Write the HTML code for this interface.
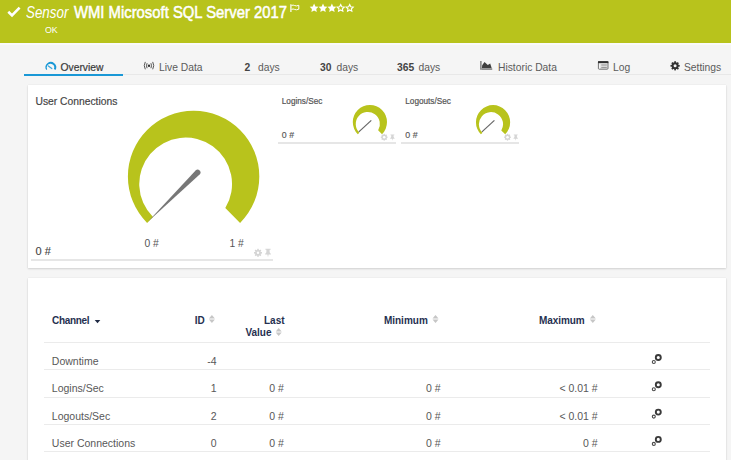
<!DOCTYPE html>
<html><head><meta charset="utf-8">
<style>
*{margin:0;padding:0;box-sizing:border-box}
html,body{width:731px;height:460px;overflow:hidden;background:#f5f5f5;font-family:"Liberation Sans",sans-serif;position:relative}
.a{position:absolute;white-space:nowrap}
#hdr{position:absolute;left:0;top:0;width:731px;height:43px;background:#b8c31c}
#hdr .t{color:#fff}
.tab{color:#5b5b5b;font-size:10.3px;line-height:12px}
.card{position:absolute;background:#fff;box-shadow:0 1px 2px rgba(0,0,0,.14),0 0 1px rgba(0,0,0,.1)}
.ttl{color:#444;-webkit-text-stroke:0.18px #444}
.th{color:#263050;font-size:10px;line-height:11.5px;font-weight:bold}
.td{color:#585858;font-size:10.5px;line-height:12px}
.r{width:100px;text-align:right}
.rl{position:absolute;left:44px;width:666px;height:1px;background:#ebebeb}
</style></head><body>
<div class="a" style="left:0;top:43px;width:731px;height:2px;background:#fafafa"></div>
<div id="hdr">
  <svg class="a" style="left:7px;top:6px" width="14" height="12" viewBox="0 0 14 12"><path d="M1.3 5.8 L5 9.4 L12.6 1.6" fill="none" stroke="#fff" stroke-width="2.6"/></svg>
  <div class="a t" style="left:26px;top:3px;font-size:15.5px;line-height:18px;font-style:italic;transform:scale(0.862,1.05);transform-origin:0 0">Sensor</div>
  <div class="a t" style="left:74px;top:3px;font-size:15.5px;line-height:18px;-webkit-text-stroke:0.5px #fff;transform:scale(0.957,1.05);transform-origin:0 0">WMI Microsoft SQL Server 2017</div>
  <svg class="a" style="left:0;top:0" width="731" height="43"><g fill="none" stroke="#fff" stroke-width="1.15"><path d="M290.9 4.2 V12" stroke-width="1.2"/><path d="M291.5 5.5 C293.8 4 295.3 7.2 298.8 5.3 V9.2 C295.3 11.1 293.8 7.9 291.5 9.4" stroke-width="1"/></g>
  <defs><path id="star" d="M0.00 -4.60 L1.32 -1.82 L4.37 -1.42 L2.14 0.70 L2.70 3.72 L0.00 2.25 L-2.70 3.72 L-2.14 0.70 L-4.37 -1.42 L-1.32 -1.82 Z"/></defs>
  <g fill="#fff"><use href="#star" x="314.1" y="8.2"/><use href="#star" x="323" y="8.2"/><use href="#star" x="331.9" y="8.2"/></g>
  <g fill="none" stroke="#fff" stroke-width="1.4" stroke-linejoin="miter"><use href="#star" x="340.7" y="8.2" transform="translate(340.7 8.2) scale(0.8) translate(-340.7 -8.2)"/><use href="#star" x="349.7" y="8.2" transform="translate(349.7 8.2) scale(0.8) translate(-349.7 -8.2)"/></g>
  </svg>
  <div class="a t" style="left:44.5px;top:24px;font-size:9.6px;line-height:11px;transform:scaleX(0.92);transform-origin:0 0">OK</div>
</div>

<!-- tabs -->
<div class="a" style="left:24px;top:74px;width:707px;height:1px;background:#e8e8e8"></div>
<div class="a" style="left:24px;top:73.5px;width:99px;height:2px;background:#1a98d6"></div>
<svg class="a" style="left:0;top:0" width="731" height="80">
  <path d="M46.22 69.92 A5.35 5.35 0 1 1 55.48 69.92 L53.97 69.05 A3.80 3.80 0 1 0 47.19 69.36 Z" fill="#1a98d6"/>
  <path d="M48.3 65.9 L51.8 68.6" stroke="#3aa7dc" stroke-width="1.2" stroke-linecap="round"/>
  <g fill="none" stroke="#555" stroke-width="1">
    <path d="M147.1 63.2 A5.5 5.5 0 0 0 147.1 68.2 M150.9 63.2 A5.5 5.5 0 0 1 150.9 68.2"/>
    <path d="M145.3 61.9 A7.5 7.5 0 0 0 145.3 69.3 M152.7 61.9 A7.5 7.5 0 0 1 152.7 69.3"/>
  </g>
  <circle cx="149" cy="65.7" r="1.2" fill="#333"/>
  <path d="M480.9 60.9 V69.7" stroke="#666" stroke-width="1.2"/>
  <path d="M481.7 69.8 L482.2 65.2 L484.5 62 L487.8 65.1 L490.2 63.6 L492.2 69.8 Z" fill="#3f3f3f"/>
  <rect x="481.6" y="68" width="10.6" height="1.8" fill="#999"/>
  <rect x="598.4" y="61.6" width="9.6" height="7.6" rx="0.8" fill="#e2e2e2" stroke="#666" stroke-width="0.9"/>
  <rect x="598" y="61.2" width="10.4" height="1.9" fill="#2f2f2f"/>
  <path d="M601.3 65 H606.8 M601.3 67.4 H606.8" stroke="#888" stroke-width="0.9"/>
  <path d="M599.6 64.2 V68.4" stroke="#f7f7f7" stroke-width="1"/>
  <g transform="translate(675.1 65.8)" fill="#333">
    <circle r="3.5"/>
    <rect x="-0.85" y="-4.6" width="1.7" height="9.2"/>
    <rect x="-0.85" y="-4.6" width="1.7" height="9.2" transform="rotate(45)"/>
    <rect x="-0.85" y="-4.6" width="1.7" height="9.2" transform="rotate(90)"/>
    <rect x="-0.85" y="-4.6" width="1.7" height="9.2" transform="rotate(135)"/>
    <circle r="1.5" fill="#f5f5f5"/>
  </g>
</svg>
<div class="a tab" style="left:60.5px;top:62px;color:#3a3a3a;font-size:10.3px;-webkit-text-stroke:0.2px #3a3a3a">Overview</div>
<div class="a tab" style="left:159px;top:62px">Live Data</div>
<div class="a tab" style="left:244.5px;top:62px"><b style="color:#444">2</b></div>
<div class="a tab" style="left:258px;top:62px">days</div>
<div class="a tab" style="left:320px;top:62px"><b style="color:#444">30</b></div>
<div class="a tab" style="left:336.5px;top:62px">days</div>
<div class="a tab" style="left:397px;top:62px"><b style="color:#444">365</b></div>
<div class="a tab" style="left:418.5px;top:62px">days</div>
<div class="a tab" style="left:498px;top:62px">Historic Data</div>
<div class="a tab" style="left:613px;top:62px">Log</div>
<div class="a tab" style="left:684px;top:62px">Settings</div>

<!-- card 1 -->
<div class="card" style="left:28px;top:85px;width:698px;height:183px"></div>
<div class="a ttl" style="left:35.5px;top:96px;font-size:10.3px;line-height:11px">User Connections</div>

<svg class="a" style="left:0;top:0" width="731" height="460">
  <path d="M147.1 222.9 A65.7 65.7 0 1 1 240.1 222.9 L225.3 208.1 A46.4 46.4 0 1 0 153.0 217.0 Z" fill="#b8c31c"/>
  <path d="M147.6 222 L195.6 170.4 A2.8 2.8 0 0 1 199.6 174.4 Z" fill="#777"/>
  <g transform="translate(369.9 122.1) scale(0.2603) translate(-193.6 -176.4)">
    <path d="M147.1 222.9 A65.7 65.7 0 1 1 240.1 222.9 L225.3 208.1 A46.4 46.4 0 1 0 153.0 217.0 Z" fill="#b8c31c"/>
  </g>
  <path d="M358.8 131.9 L371.3 120.4" stroke="#666" stroke-width="1.2"/>
  <g transform="translate(493.05 122.2) scale(0.2603) translate(-193.6 -176.4)">
    <path d="M147.1 222.9 A65.7 65.7 0 1 1 240.1 222.9 L225.3 208.1 A46.4 46.4 0 1 0 153.0 217.0 Z" fill="#b8c31c"/>
  </g>
  <path d="M481.9 131.9 L494.4 120.4" stroke="#666" stroke-width="1.2"/>
</svg>

<div class="a" style="left:31px;top:259px;width:242px;height:2px;background:#e6e6e6"></div>
<div class="a td" style="left:35.5px;top:245px;font-size:11px;line-height:13px;color:#444;-webkit-text-stroke:0.12px #444">0 #</div>
<div class="a td" style="left:144.5px;top:238px;font-size:10.3px;color:#555">0 #</div>
<div class="a td" style="left:229.5px;top:238px;font-size:10.3px;color:#555">1 #</div>

<div class="a ttl" style="left:281.8px;top:96.5px;font-size:8.2px;line-height:9px;color:#555;-webkit-text-stroke:0.2px #555">Logins/Sec</div>
<div class="a td" style="left:281.8px;top:131px;font-size:8.8px;line-height:9px;-webkit-text-stroke:0.15px #555">0 #</div>
<div class="a" style="left:278px;top:142px;width:118px;height:2px;background:#e6e6e6"></div>

<div class="a ttl" style="left:405.3px;top:96.5px;font-size:8.2px;line-height:9px;color:#555;-webkit-text-stroke:0.2px #555">Logouts/Sec</div>
<div class="a td" style="left:405.3px;top:131px;font-size:8.8px;line-height:9px;-webkit-text-stroke:0.15px #555">0 #</div>
<div class="a" style="left:401px;top:142px;width:118px;height:2px;background:#e6e6e6"></div>

<!-- card 2 -->
<div class="card" style="left:28px;top:278px;width:698px;height:200px"></div>
<div class="a th" style="left:52px;top:315px;letter-spacing:-0.3px">Channel</div>
<div class="a th" style="left:194.8px;top:315px">ID</div>
<div class="a th" style="left:264px;top:315px">Last</div>
<div class="a th" style="left:245.4px;top:326.5px">Value</div>
<div class="a th" style="left:383.9px;top:315px">Minimum</div>
<div class="a th" style="left:538.9px;top:315px;letter-spacing:-0.05px">Maximum</div>

<div class="rl" style="top:342px"></div>
<div class="rl" style="top:369px"></div>
<div class="rl" style="top:397px"></div>
<div class="rl" style="top:424px"></div>
<div class="rl" style="top:451px"></div>

<div class="a td" style="left:51.8px;top:355px">Downtime</div>
<div class="a td" style="left:51.8px;top:382.25px">Logins/Sec</div>
<div class="a td" style="left:51.8px;top:409.5px">Logouts/Sec</div>
<div class="a td" style="left:51.8px;top:436.75px">User Connections</div>


<!-- widget icons -->
<svg class="a" style="left:0;top:0" width="731" height="460">
  <defs>
    <g id="gear"><circle cx="0" cy="0" r="2.9"/><rect x="-0.8" y="-4" width="1.6" height="8"/><rect x="-0.8" y="-4" width="1.6" height="8" transform="rotate(45)"/><rect x="-0.8" y="-4" width="1.6" height="8" transform="rotate(90)"/><rect x="-0.8" y="-4" width="1.6" height="8" transform="rotate(135)"/></g>
    <g id="pin"><path d="M-2.6 -3.9 H2.6 V-2.9 H1.6 V-0.3 L2.9 1.3 V2 H-2.9 V1.3 L-1.6 -0.3 V-2.9 H-2.6 Z M-0.6 2 H0.6 L0 4.6 Z"/></g>
    <g id="sort"><path d="M0 -4 L3 -0.6 H-3 Z M0 4 L3 0.6 H-3 Z"/></g>
    <g id="ch"><circle cx="4.5" cy="-1.3" r="2.5" fill="none" stroke="#3a3a3a" stroke-width="1.9"/><circle cx="0" cy="3.2" r="1.5" fill="none" stroke="#4a4a4a" stroke-width="1.1"/></g>
  </defs>
  <g fill="#d5d5d5">
    <use href="#gear" x="258" y="252.8"/><circle cx="258" cy="252.8" r="1.2" fill="#fff"/>
    <use href="#pin" x="268" y="252.6"/>
    <g transform="translate(384.2 137.2)"><circle r="2.7"/><rect x="-0.65" y="-3.4" width="1.3" height="6.8"/><rect x="-0.65" y="-3.4" width="1.3" height="6.8" transform="rotate(45)"/><rect x="-0.65" y="-3.4" width="1.3" height="6.8" transform="rotate(90)"/><rect x="-0.65" y="-3.4" width="1.3" height="6.8" transform="rotate(135)"/><circle r="1.25" fill="#fff"/></g>
    <use href="#pin" x="392.4" y="137.3" transform="translate(392.4 137.3) scale(0.75) translate(-392.4 -137.3)"/>
    <g transform="translate(507.5 137.2)"><circle r="2.7"/><rect x="-0.65" y="-3.4" width="1.3" height="6.8"/><rect x="-0.65" y="-3.4" width="1.3" height="6.8" transform="rotate(45)"/><rect x="-0.65" y="-3.4" width="1.3" height="6.8" transform="rotate(90)"/><rect x="-0.65" y="-3.4" width="1.3" height="6.8" transform="rotate(135)"/><circle r="1.25" fill="#fff"/></g>
    <use href="#pin" x="515.7" y="137.3" transform="translate(515.7 137.3) scale(0.75) translate(-515.7 -137.3)"/>
  </g>
  <g fill="#c6c6c6">
    <use href="#sort" x="211.9" y="319"/>
    <use href="#sort" x="278.7" y="332"/>
    <use href="#sort" x="435.5" y="319"/>
    <use href="#sort" x="592.8" y="319"/>
  </g>
  <path d="M94.7 320 H100.3 L97.5 323.2 Z" fill="#1f2a44"/>
  <use href="#ch" x="653.8" y="358.8"/>
  <use href="#ch" x="653.8" y="386.1"/>
  <use href="#ch" x="653.8" y="413.4"/>
  <use href="#ch" x="653.8" y="440.7"/>
</svg>

<div class="a td r" style="left:116.5px;top:355px">-4</div>
<div class="a td r" style="left:116.5px;top:382.25px">1</div>
<div class="a td r" style="left:116.5px;top:409.5px">2</div>
<div class="a td r" style="left:116.5px;top:436.75px">0</div>
<div class="a td r" style="left:183.8px;top:382.25px">0 #</div>
<div class="a td r" style="left:183.8px;top:409.5px">0 #</div>
<div class="a td r" style="left:183.8px;top:436.75px">0 #</div>
<div class="a td r" style="left:340.6px;top:382.25px">0 #</div>
<div class="a td r" style="left:340.6px;top:409.5px">0 #</div>
<div class="a td r" style="left:340.6px;top:436.75px">0 #</div>
<div class="a td r" style="left:497.7px;top:382.25px">&lt; 0.01 #</div>
<div class="a td r" style="left:497.7px;top:409.5px">&lt; 0.01 #</div>
<div class="a td r" style="left:497.7px;top:436.75px">0 #</div>
</body></html>
